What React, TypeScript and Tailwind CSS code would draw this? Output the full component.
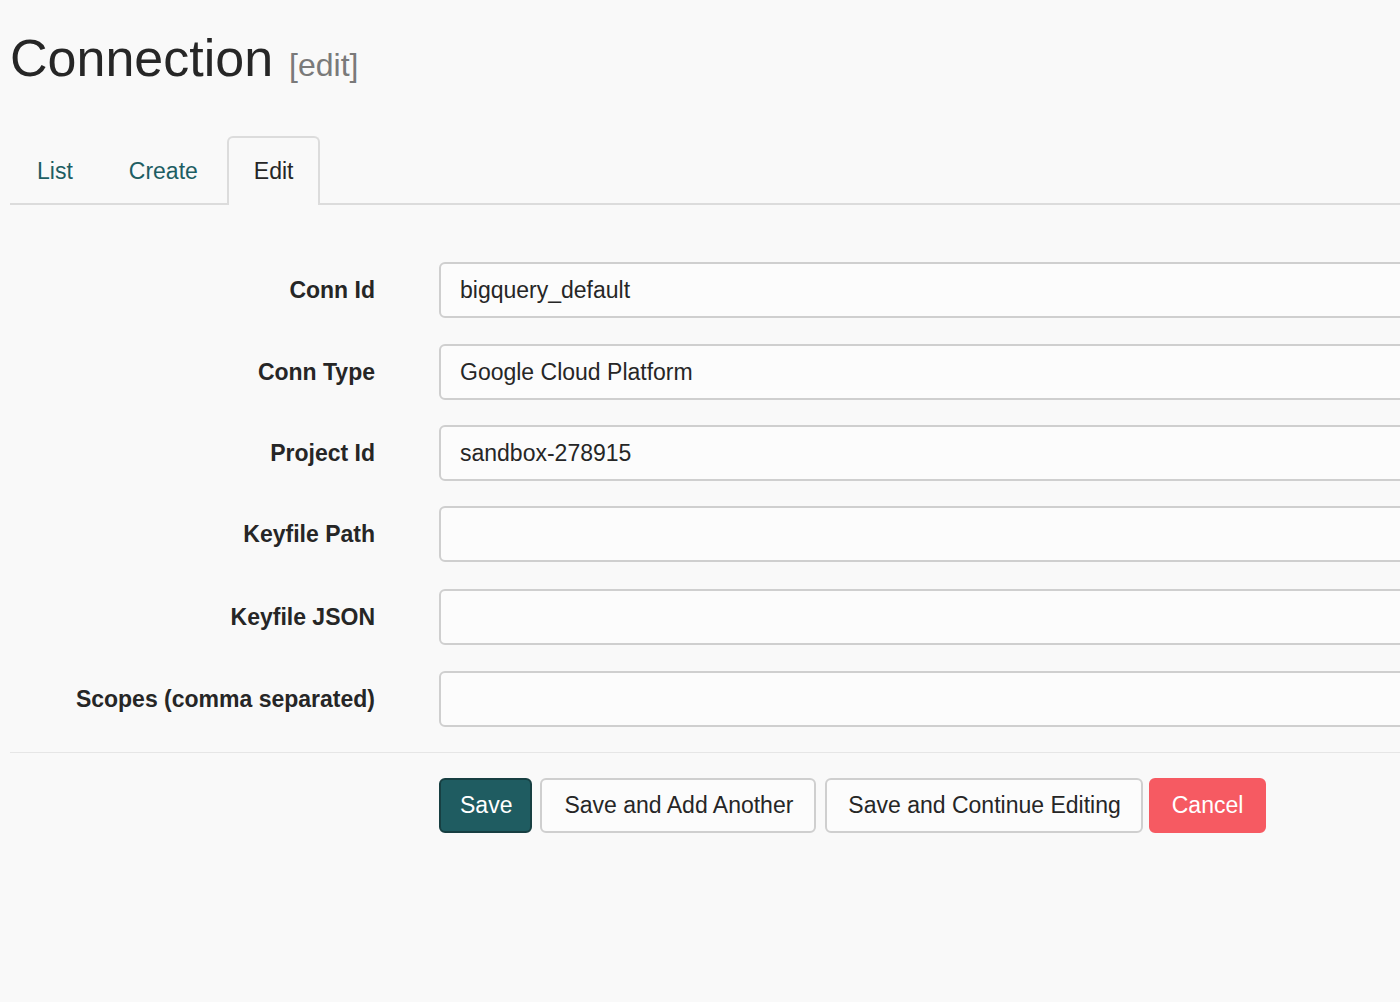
import React from "react";

const fields = [
  { label: "Conn Id", value: "bigquery_default", gap: "mb-[26px]" },
  { label: "Conn Type", value: "Google Cloud Platform", gap: "mb-[25px]" },
  { label: "Project Id", value: "sandbox-278915", gap: "mb-[25px]" },
  { label: "Keyfile Path", value: "", gap: "mb-[27px]" },
  { label: "Keyfile JSON", value: "", gap: "mb-[26px]" },
  { label: "Scopes (comma separated)", value: "", gap: "mb-[25px]" },
];

export default function App() {
  return (
    <div className="min-h-[1002px] w-[1400px] overflow-hidden bg-[#f9f9f9] font-['Liberation_Sans',Arial,sans-serif] text-[#262626]">
      <div className="pl-[10px]">
        {/* Title */}
        <h2 className="flex items-baseline pt-[30px] text-[52px] leading-[56px] font-normal text-[#262626]">
          Connection
          <small className="ml-[16px] text-[32px] text-[#7a7a7a]">[edit]</small>
        </h2>

        {/* Tabs */}
        <ul className="mt-[43px] flex items-end border-b-2 border-[#dcdcdc]">
          <li className="mr-[2px]">
            <a className="block px-[27px] pt-[23px] pb-[19px] text-[23px] leading-[25px] text-[#1d5e63]">
              List
            </a>
          </li>
          <li className="mr-[2px]">
            <a className="block px-[27px] pt-[23px] pb-[19px] text-[23px] leading-[25px] text-[#1d5e63]">
              Create
            </a>
          </li>
          <li className="-mb-[2px]">
            <a className="block rounded-t-[6px] border-2 border-b-0 border-[#dcdcdc] bg-[#f9f9f9] px-[25px] pt-[21px] pb-[21px] text-[23px] leading-[25px] text-[#262626]">
              Edit
            </a>
          </li>
        </ul>

        {/* Form */}
        <div className="pt-[57px]">
          {fields.map((f) => (
            <div key={f.label} className={`${f.gap} flex items-center`}>
              <label className="w-[365px] shrink-0 text-right text-[23px] font-bold text-[#262626]">
                {f.label}
              </label>
              <div className="ml-[64px] flex h-[56px] w-[1100px] shrink-0 items-center rounded-[6px] border-2 border-[#cfcfcf] bg-[#fcfcfc] px-[19px] text-[23px] text-[#262626]">
                {f.value}
              </div>
            </div>
          ))}
        </div>

        <div className="border-t border-[#e6e6e6]" />

        {/* Buttons */}
        <div className="flex pt-[25px] pl-[429px]">
          <button className="mr-[8px] h-[55px] rounded-[6px] border-2 border-[#173f42] bg-[#1f5c61] pl-[19px] pr-[18px] text-[23px] text-white">
            Save
          </button>
          <button className="mr-[9px] h-[55px] rounded-[6px] border-2 border-[#cfcfcf] bg-[#fcfcfc] pl-[22px] pr-[21px] text-[23px] text-[#262626]">
            Save and Add Another
          </button>
          <button className="mr-[6px] h-[55px] rounded-[6px] border-2 border-[#cfcfcf] bg-[#fcfcfc] pl-[21px] pr-[20px] text-[23px] text-[#262626]">
            Save and Continue Editing
          </button>
          <button className="h-[55px] rounded-[6px] border-2 border-[#f65a62] bg-[#f65a62] px-[21px] text-[23px] text-white">
            Cancel
          </button>
        </div>
      </div>
    </div>
  );
}
